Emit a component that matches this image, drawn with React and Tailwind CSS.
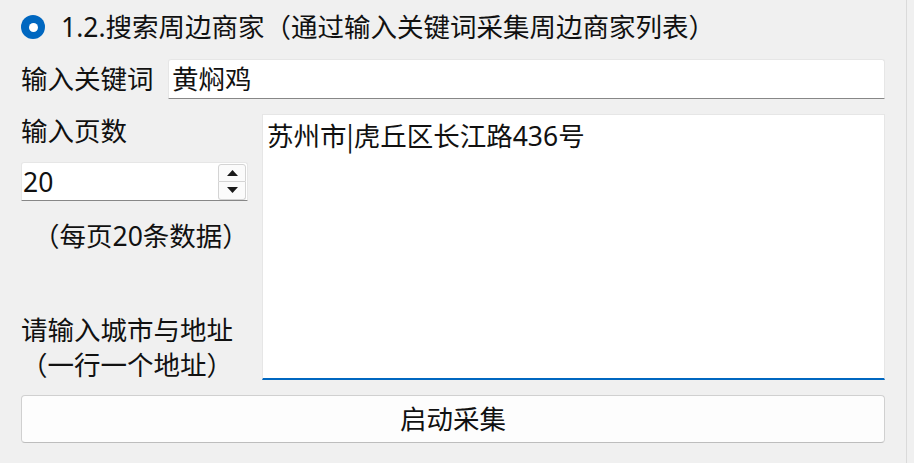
import React from "react";

const font = { fontFamily: '"Noto Sans", "Noto Sans CJK SC", sans-serif' };
const cjk = { fontFamily: '"Noto Sans CJK SC", sans-serif' };

const SpinArrow = ({ down }) => (
  <svg width="11" height="6" viewBox="0 0 11 6">
    <path d={down ? "M0 0 L11 0 L5.5 6 Z" : "M0 6 L11 6 L5.5 0 Z"} fill="#1a1a1a" />
  </svg>
);

export default function App() {
  return (
    <div className="w-[914px] h-[463px] bg-[#f0f0f0] flex text-[26.5px] text-[#111]" style={font}>
      <div className="w-[907px] h-full border-r border-[#dadada] pl-[21px] pr-[21px] flex flex-col">
        {/* title with radio */}
        <div className="h-[54px] flex items-center gap-[16px]">
          <div className="w-[24px] h-[24px] rounded-full bg-[#0067c0] flex items-center justify-center">
            <div className="w-[9px] h-[9px] rounded-full bg-white" />
          </div>
          <span className="leading-[34px] whitespace-nowrap">1.2.搜索周边商家（通过输入关键词采集周边商家列表）</span>
        </div>

        {/* keyword */}
        <div className="mt-[5px] h-[40px] flex items-center">
          <span className="w-[147px] leading-[34px] whitespace-nowrap">输入关键词</span>
          <div className="flex-1 h-full bg-white border border-[#e6e6e6] border-b-[#878787] rounded-t-[3px] pl-[3px] flex items-center leading-[34px]">
            黄焖鸡
          </div>
        </div>

        {/* pages + addresses */}
        <div className="mt-[15px] h-[266px] flex">
          <div className="w-[227px] h-full flex flex-col">
            <span className="h-[34px] leading-[34px] whitespace-nowrap">输入页数</span>
            <div className="mt-[14px] h-[39px] bg-white border border-[#e6e6e6] border-b-[#878787] rounded-t-[3px] flex items-center justify-between pl-[1px] pr-[1px]">
              <span className="leading-[34px]">20</span>
              <div className="w-[28px] h-[36px] flex flex-col">
                <div className="h-[18px] border border-[#d4d4d4] rounded-t-[3px] bg-[#fbfbfb] flex items-center justify-center">
                  <SpinArrow />
                </div>
                <div className="h-[18px] border border-t-0 border-[#d4d4d4] rounded-b-[3px] bg-[#fbfbfb] flex items-center justify-center">
                  <SpinArrow down />
                </div>
              </div>
            </div>
            <span className="mt-[18px] h-[34px] leading-[34px] whitespace-nowrap pl-[12px]">（每页20条数据）</span>
            <div className="flex-1" />
            <div className="w-fit flex flex-col items-center leading-[35px] mb-[-3px]">
              <span className="whitespace-nowrap">请输入城市与地址</span>
              <span className="whitespace-nowrap">（一行一个地址）</span>
            </div>
          </div>
          <div className="ml-[14px] flex-1 h-full bg-white border border-[#e6e6e6] border-b-2 border-b-[#0067c0] pl-[4px] pt-[3px] leading-[34px]">
            苏州市<span style={cjk}>|</span>虎丘区长江路436号
          </div>
        </div>

        {/* start button */}
        <button className="mt-[15px] h-[48px] w-full bg-[#fdfdfd] border border-[#d0d0d0] border-b-[#bdbdbd] rounded-[4px] flex items-center justify-center leading-[34px]">
          启动采集
        </button>
      </div>
    </div>
  );
}
